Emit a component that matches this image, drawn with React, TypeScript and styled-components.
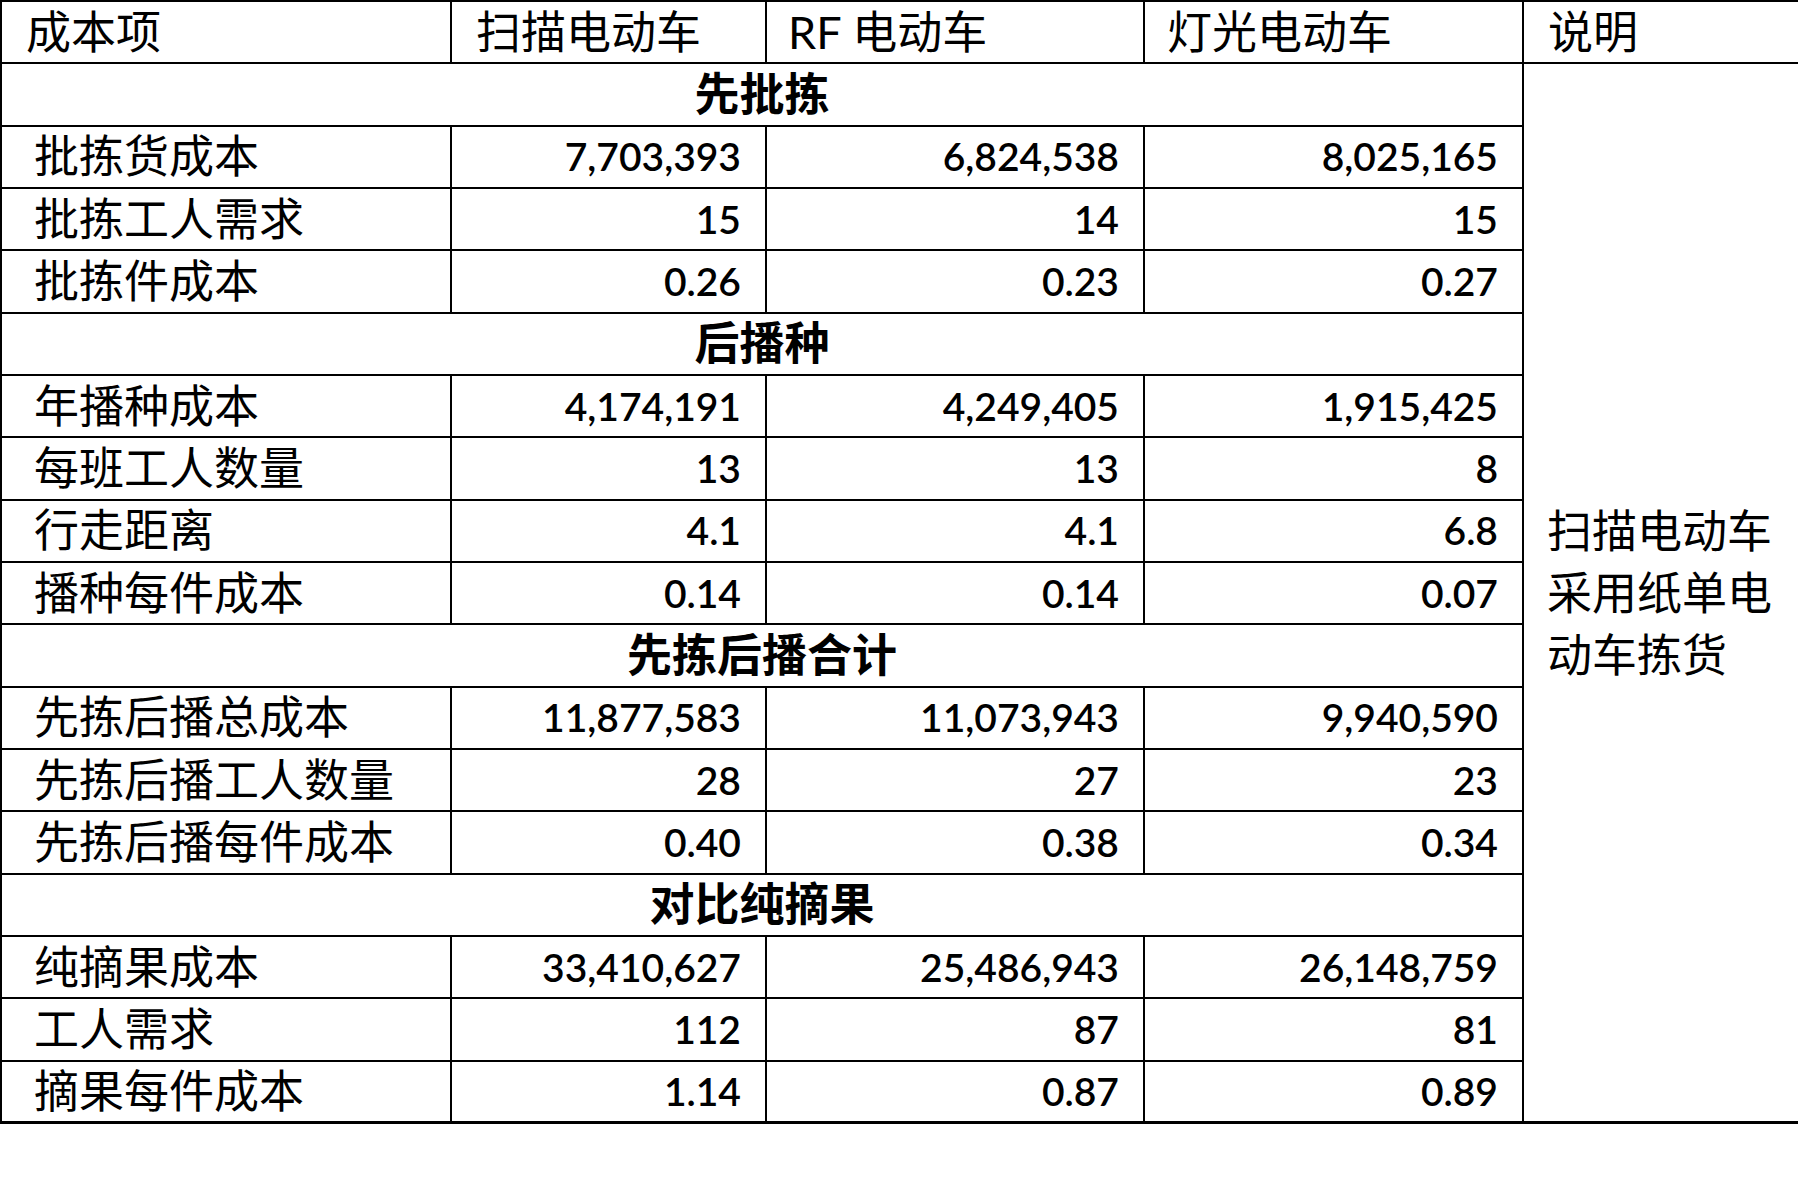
import React from "react";
import styled, { createGlobalStyle } from "styled-components";

const Global = createGlobalStyle`
  html, body { margin: 0; padding: 0; background: #fff; overflow: hidden; }
  body { font-family: "Lato", "Noto Sans CJK SC", sans-serif; color: #000; }
`;

const Table = styled.table`
  border-collapse: collapse;
  table-layout: fixed;
  width: 1800px;
  border-top: 2px solid #000;
  border-bottom: 3px solid #000;
`;

const Row = styled.tr`
  height: 62.33px;
`;

const Cell = styled.td<{ $align?: "left" | "right" | "center"; $pad?: number; $bold?: boolean; $num?: boolean }>`
  border: 2px solid #000;
  padding: 0 ${(p) => (p.$align === "right" ? 24 : 0)}px 0 ${(p) => p.$pad ?? 0}px;
  text-align: ${(p) => p.$align ?? "left"};
  vertical-align: middle;
  white-space: nowrap;
  font-family: "Lato", "Noto Sans CJK SC", sans-serif;
  font-size: ${(p) => (p.$num ? 39 : 45)}px;
  font-weight: ${(p) => (p.$bold ? 700 : p.$num ? 600 : 400)};
  line-height: 1;
`;

const DescCell = styled.td`
  border: 2px solid #000;
  border-right: none;
  padding: 0 20px 0 23px;
  vertical-align: middle;
  font-family: "Lato", "Noto Sans CJK SC", sans-serif;
  font-size: 45px;
  line-height: 62px;
  word-break: break-all;
`;

type DataRow = { label: string; values: string[] };
type Section = { title: string; rows: DataRow[] };

const sections: Section[] = [
  {
    title: "先批拣",
    rows: [
      { label: "批拣货成本", values: ["7,703,393", "6,824,538", "8,025,165"] },
      { label: "批拣工人需求", values: ["15", "14", "15"] },
      { label: "批拣件成本", values: ["0.26", "0.23", "0.27"] },
    ],
  },
  {
    title: "后播种",
    rows: [
      { label: "年播种成本", values: ["4,174,191", "4,249,405", "1,915,425"] },
      { label: "每班工人数量", values: ["13", "13", "8"] },
      { label: "行走距离", values: ["4.1", "4.1", "6.8"] },
      { label: "播种每件成本", values: ["0.14", "0.14", "0.07"] },
    ],
  },
  {
    title: "先拣后播合计",
    rows: [
      { label: "先拣后播总成本", values: ["11,877,583", "11,073,943", "9,940,590"] },
      { label: "先拣后播工人数量", values: ["28", "27", "23"] },
      { label: "先拣后播每件成本", values: ["0.40", "0.38", "0.34"] },
    ],
  },
  {
    title: "对比纯摘果",
    rows: [
      { label: "纯摘果成本", values: ["33,410,627", "25,486,943", "26,148,759"] },
      { label: "工人需求", values: ["112", "87", "81"] },
      { label: "摘果每件成本", values: ["1.14", "0.87", "0.89"] },
    ],
  },
];

const totalRows = sections.reduce((n, s) => n + 1 + s.rows.length, 0);

export default function App() {
  return (
    <>
      <Global />
      <Table>
        <colgroup>
          <col style={{ width: 450 }} />
          <col style={{ width: 315 }} />
          <col style={{ width: 378 }} />
          <col style={{ width: 379 }} />
          <col style={{ width: 278 }} />
        </colgroup>
        <tbody>
          <Row>
            <Cell $pad={24}>成本项</Cell>
            <Cell $pad={24}>扫描电动车</Cell>
            <Cell $pad={21}>RF 电动车</Cell>
            <Cell $pad={22}>灯光电动车</Cell>
            <Cell $pad={24}>说明</Cell>
          </Row>
          {sections.map((s, si) => (
            <React.Fragment key={s.title}>
              <Row>
                <Cell colSpan={4} $align="center" $bold>
                  {s.title}
                </Cell>
                {si === 0 && <DescCell rowSpan={totalRows}>扫描电动车采用纸单电动车拣货</DescCell>}
              </Row>
              {s.rows.map((r) => (
                <Row key={r.label}>
                  <Cell $pad={32}>{r.label}</Cell>
                  {r.values.map((v, i) => (
                    <Cell key={i} $align="right" $num>
                      {v}
                    </Cell>
                  ))}
                </Row>
              ))}
            </React.Fragment>
          ))}
        </tbody>
      </Table>
    </>
  );
}
